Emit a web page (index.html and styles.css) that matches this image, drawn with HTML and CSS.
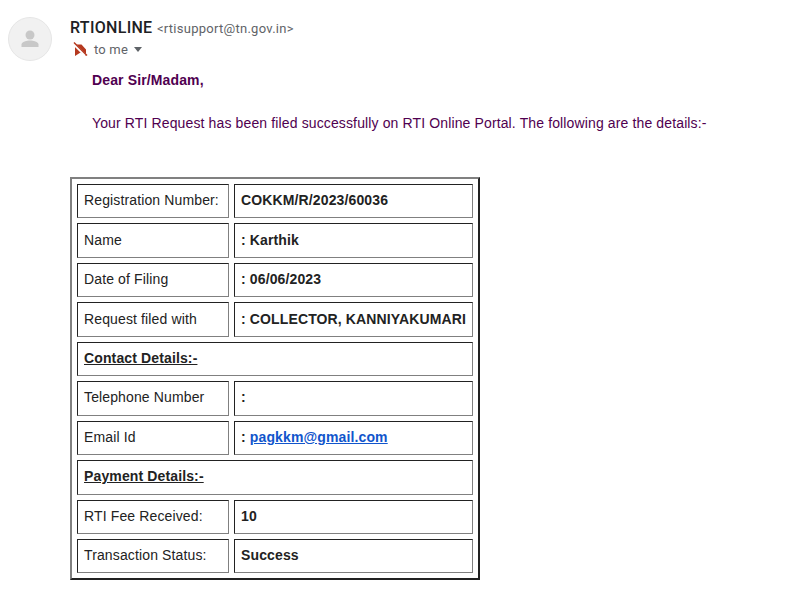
FILE: index.html
```html
<!DOCTYPE html>
<html lang="en">
<head>
    <meta charset="UTF-8">
    <meta name="viewport" content="width=device-width, initial-scale=1.0">
    <title>RTI Request</title>
    <link rel="stylesheet" href="styles.css">
</head>
<body>
    <!-- Sender header -->
    <div class="header">
        <div class="avatar">
            <svg viewBox="0 0 24 24" width="24" height="24"><circle cx="12" cy="8" r="4.500" fill="#c8c8c8"/><path d="M3.500 20v-2.500c0-2.800 5.500-4 8.500-4s8.500 1.200 8.500 4V20z" fill="#c8c8c8"/></svg>
        </div>
        <div class="sender">
            <div class="from"><span class="name">RTIONLINE</span> <span class="address">&lt;rtisupport@tn.gov.in&gt;</span></div>
            <div class="to">
                <svg class="label" viewBox="0 0 16 16" width="16" height="16"><path d="M3 3.500h6.500L14 8.500V15L8.500 11.500 3 15z" fill="#b5391f"/><path d="M2 3l11.500 11.500" stroke="#fff" stroke-width="3"/><path d="M2 1.500l13 13" stroke="#b5391f" stroke-width="1.500"/></svg>
                <span>to me</span>
                <span class="caret"></span>
            </div>
        </div>
    </div>

    <!-- Message -->
    <div class="message">
        <p class="greeting">Dear Sir/Madam,</p>
        <p class="intro">Your RTI Request has been filed successfully on RTI Online Portal. The following are the details:-</p>
    </div>

    <table class="details">
        <tr><td class="key">Registration Number:</td><td class="value">COKKM/R/2023/60036</td></tr>
        <tr><td class="key">Name</td><td class="value">: Karthik</td></tr>
        <tr><td class="key">Date of Filing</td><td class="value">: 06/06/2023</td></tr>
        <tr><td class="key">Request filed with</td><td class="value">: COLLECTOR, KANNIYAKUMARI</td></tr>
        <tr><td class="section" colspan="2">Contact Details:-</td></tr>
        <tr><td class="key">Telephone Number</td><td class="value">:</td></tr>
        <tr><td class="key">Email Id</td><td class="value">: <a href="#">pagkkm@gmail.com</a></td></tr>
        <tr><td class="section" colspan="2">Payment Details:-</td></tr>
        <tr><td class="key">RTI Fee Received:</td><td class="value">10</td></tr>
        <tr><td class="key">Transaction Status:</td><td class="value">Success</td></tr>
    </table>
</body>
</html>
```

FILE: styles.css
```css
body {
    margin: 0;
    background: #fff;
    font-family: "Liberation Sans", Arial, sans-serif;
    color: #222;
}

.header {
    display: flex;
    padding: 17px 0 0 8px;
}

.avatar {
    width: 42px;
    height: 42px;
    border: 1px solid #e6e6e6;
    border-radius: 50%;
    background: #f1f1f1;
    display: flex;
    align-items: center;
    justify-content: center;
}

.sender {
    margin-left: 18px;
    margin-top: 2px;
}

.from {
    line-height: 18px;
}

.name {
    font-family: Roboto, sans-serif;
    font-size: 16px;
    font-weight: 500;
    color: #202124;
    letter-spacing: 0.300px;
}

.address {
    font-family: Roboto, sans-serif;
    font-size: 13px;
    letter-spacing: 0.270px;
    color: #5f6368;
}

.to {
    display: flex;
    align-items: center;
    margin-top: 3px;
    margin-left: 2px;
    font-family: Roboto, sans-serif;
    font-size: 13px;
    letter-spacing: 0.200px;
    color: #5f6368;
}

.label {
    margin-right: 6px;
}

.caret {
    width: 0;
    height: 0;
    margin: 0 0 0 6px;
    border-left: 4.500px solid transparent;
    border-right: 4.500px solid transparent;
    border-top: 5px solid #5f6368;
}

.message {
    margin: 11px 0 0 92px;
    font-size: 14px;
    line-height: 16px;
    letter-spacing: 0.130px;
    color: #500050;
}

.message p {
    margin: 0;
}

.greeting {
    font-weight: bold;
}

.intro {
    margin-top: 27px !important;
}

.details {
    margin: 46px 0 0 70px;
    width: 410px;
    border: 2px solid;
    border-color: #808080 #222 #222 #808080;
    border-spacing: 5px;
    font-size: 14px;
    letter-spacing: 0.130px;
    color: #222;
}

.details td {
    height: 30.440px;
    padding: 0 4px 2px 6px;
    border: 1px solid;
    border-color: #222 #808080 #808080 #222;
    white-space: nowrap;
}

.key {
    width: 140px;
}

.value, .section {
    font-weight: bold;
}

.section {
    text-decoration: underline;
}

.details a {
    color: #1155cc;
}
```
